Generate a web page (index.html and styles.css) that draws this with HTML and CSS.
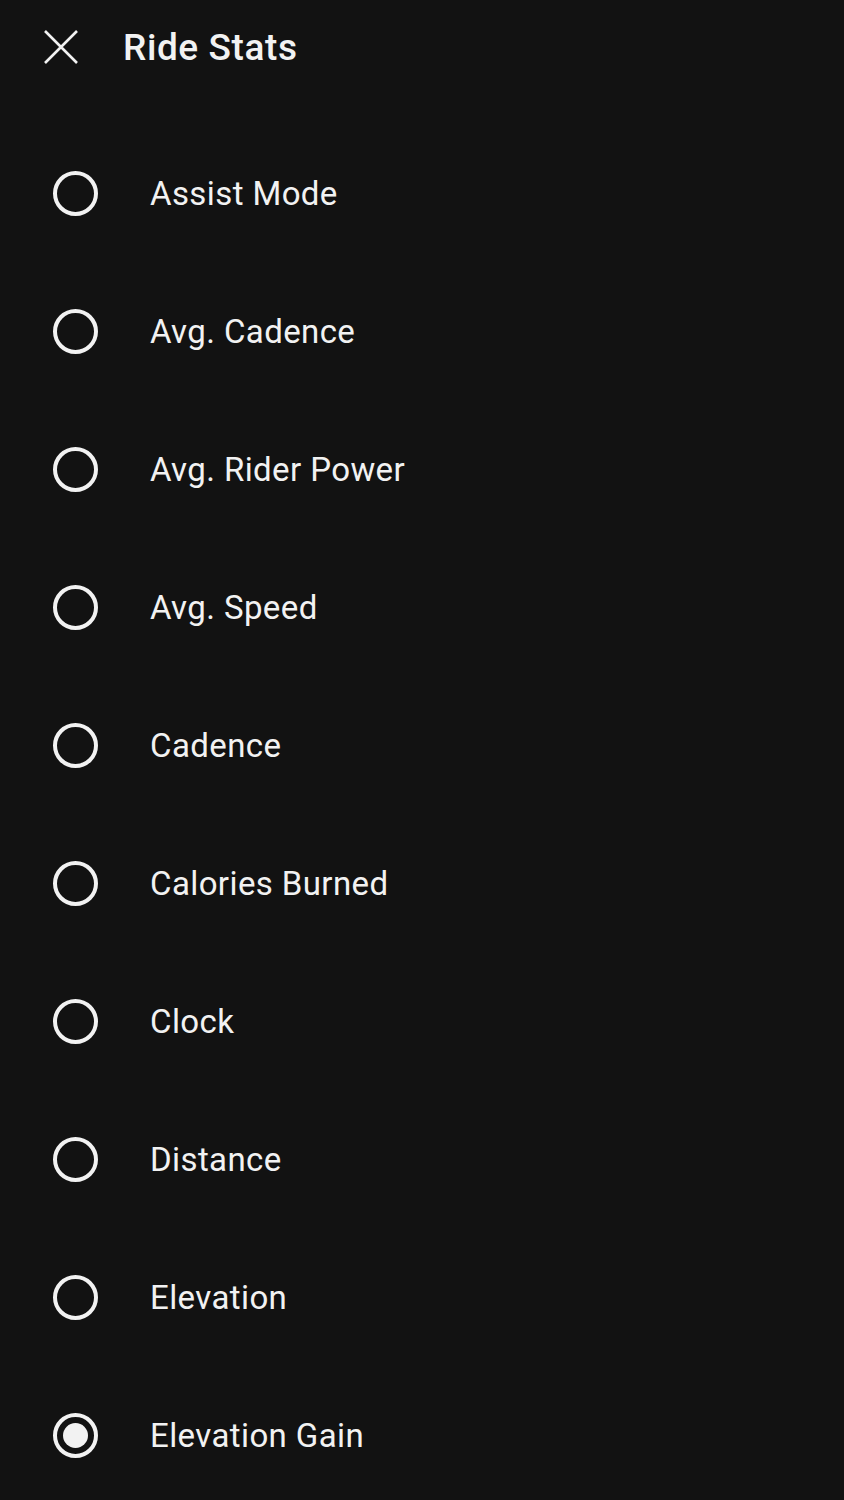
FILE: index.html
```html
<!DOCTYPE html>
<html>
<head>
<meta charset="utf-8">
<link rel="stylesheet" href="styles.css">
</head>
<body>
<div class="screen">
  <header class="header">
    <svg class="close" width="36" height="36" viewBox="0 0 36 36"><path d="M2 2 L34 34 M34 2 L2 34" stroke="#f2f2f2" stroke-width="2.6" fill="none"/></svg>
    <h1 class="title">Ride Stats</h1>
  </header>
  <ul class="list">
    <li class="item"><span class="radio"></span><span class="label">Assist Mode</span></li>
    <li class="item"><span class="radio"></span><span class="label">Avg. Cadence</span></li>
    <li class="item"><span class="radio"></span><span class="label">Avg. Rider Power</span></li>
    <li class="item"><span class="radio"></span><span class="label">Avg. Speed</span></li>
    <li class="item"><span class="radio"></span><span class="label">Cadence</span></li>
    <li class="item"><span class="radio"></span><span class="label">Calories Burned</span></li>
    <li class="item"><span class="radio"></span><span class="label">Clock</span></li>
    <li class="item"><span class="radio"></span><span class="label">Distance</span></li>
    <li class="item"><span class="radio"></span><span class="label">Elevation</span></li>
    <li class="item"><span class="radio checked"></span><span class="label">Elevation Gain</span></li>
  </ul>
</div>
</body>
</html>
```
FILE: styles.css
```css
html, body {
  margin: 0;
  padding: 0;
  background: #121212;
}
.screen {
  width: 844px;
  height: 1500px;
  overflow: hidden;
  background: #121212;
  color: #f2f2f2;
  font-family: Roboto, "Liberation Sans", sans-serif;
}
.header {
  display: flex;
  align-items: center;
  height: 94px;
  padding-left: 43px;
}
.close {
  display: block;
  flex: none;
}
.title {
  margin: 0 0 0 44px;
  font-size: 37px;
  font-weight: 500;
  letter-spacing: 0.6px;
}
.list {
  list-style: none;
  margin: 0;
  padding: 0;
  padding-top: 30px;
}
.item {
  display: flex;
  align-items: center;
  height: 138px;
  padding-left: 53px;
}
.radio {
  box-sizing: border-box;
  width: 45px;
  height: 45px;
  border: 4px solid #f2f2f2;
  border-radius: 50%;
  flex: none;
  position: relative;
}
.radio.checked::after {
  content: "";
  position: absolute;
  left: 50%;
  top: 50%;
  width: 25px;
  height: 25px;
  margin: -12.5px 0 0 -12.5px;
  border-radius: 50%;
  background: #f2f2f2;
}
.label {
  margin-left: 52px;
  font-size: 33px;
  letter-spacing: 0.4px;
}
```
